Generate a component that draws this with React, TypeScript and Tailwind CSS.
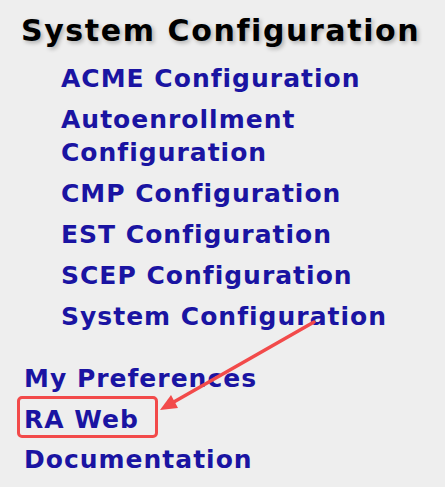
import React from 'react';

const subLinks = [
  'ACME Configuration',
  'Autoenrollment Configuration',
  'CMP Configuration',
  'EST Configuration',
  'SCEP Configuration',
  'System Configuration',
];

const mainLinks = ['My Preferences', 'RA Web', 'Documentation'];

const NavLink = (props: any) => {
  return (
    <a href="#" className="block text-[25px] leading-[33px] font-bold tracking-[1px] text-[#1a14a2] no-underline">
      {props.label}
    </a>
  );
};

const App = () => {
  return (
    <div
      className="relative h-[487px] w-[445px] overflow-hidden bg-[#eeeeee]"
      style={{ fontFamily: '"DejaVu Sans", Verdana, sans-serif' }}
    >
      <h1 className="pl-[21px] pt-[13px] text-[30px] leading-[36px] font-bold tracking-[1.6px] text-black [text-shadow:2px_2px_4px_rgba(0,0,0,0.28)]">
        System Configuration
      </h1>
      <div className="flex flex-col gap-[8px] pl-[61px] pt-[13px] pr-[40px]">
        {subLinks.map((l) => (
          <NavLink key={l} label={l} />
        ))}
      </div>
      <div className="flex flex-col gap-[7.5px] pl-[24px] pt-[29px]">
        {mainLinks.map((l) => (
          <NavLink key={l} label={l} />
        ))}
      </div>

      {/* annotation */}
      <div className="absolute left-[17px] top-[396px] h-[42px] w-[141px] rounded-[5px] border-[3px] border-[#f24a4a]" />
      <svg className="absolute left-0 top-0" width="445" height="487">
        <line x1="314" y1="322" x2="172" y2="403" stroke="#f24a4a" strokeWidth="3.5" strokeLinecap="round" />
        <polygon points="160,410 171,395 178,408" fill="#f24a4a" />
      </svg>
    </div>
  );
};

export default App;
